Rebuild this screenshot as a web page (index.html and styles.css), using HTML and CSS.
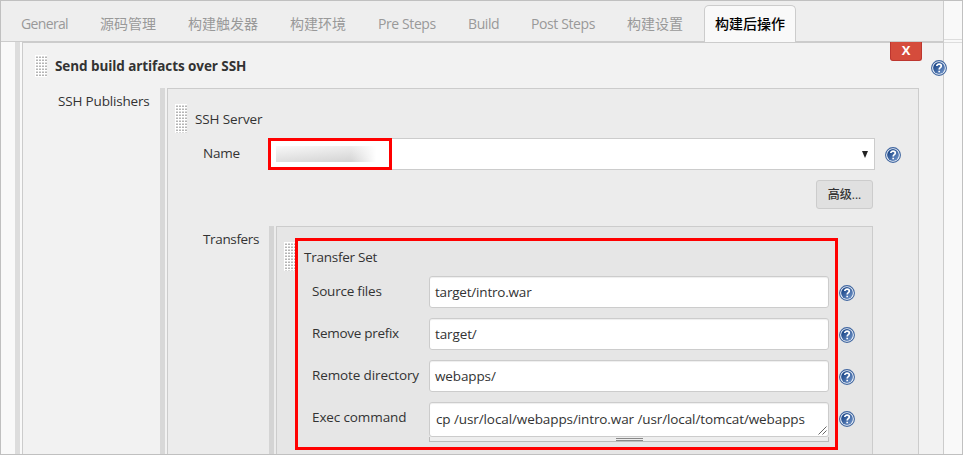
FILE: index.html
```html
<!DOCTYPE html>
<html lang="zh-CN">
<head>
<meta charset="utf-8">
<title>构建后操作</title>
<link rel="stylesheet" href="styles.css">
</head>
<body>
<svg class="defs" width="0" height="0" aria-hidden="true">
  <defs>
    <linearGradient id="blue" x1="0" y1="0" x2="1" y2="1"><stop offset=".2" stop-color="#204b8c"/><stop offset="1" stop-color="#779ace"/></linearGradient>
    <symbol id="help" viewBox="0 0 16 16">
      <circle cx="8" cy="8" r="7.4" fill="#f5f8fc" stroke="#3f659f" stroke-width="1.1"/>
      <circle cx="8" cy="8" r="5.9" fill="url(#blue)"/>
      <path d="M5.8 6.1C5.8 3.5 10.3 3.5 10.3 6.1C10.3 7.7 8.2 7.7 8.2 9.4M8.2 10.7V12.2" fill="none" stroke="#fff" stroke-width="1.7"/>
    </symbol>
  </defs>
</svg>
<div class="frame">
  <main class="config">
    <nav class="tabs">
      <span class="tab t1">General</span><span class="tab t2">源码管理</span><span class="tab t3">构建触发器</span><span class="tab t4">构建环境</span><span class="tab t5">Pre Steps</span><span class="tab t6">Build</span><span class="tab t7">Post Steps</span><span class="tab t8">构建设置</span><span class="tab active">构建后操作</span>
    </nav>
    <div class="body">
      <i class="bar"></i>
      <section class="step">
        <header class="step-head">
          <i class="grip"></i><b class="title">Send build artifacts over SSH</b>
          <button class="remove">X</button>
          <svg class="help"><use href="#help"/></svg>
        </header>
        <div class="publishers">
          <span class="publishers-label">SSH Publishers</span>
          <i class="bar"></i>
          <section class="server">
            <div class="server-head"><i class="grip tall"></i><span class="server-title">SSH Server</span></div>
            <div class="name-row">
              <span class="label name">Name</span>
              <div class="select"><div class="mark"><i class="redacted"></i></div><svg class="arrow" viewBox="0 0 6 7"><path d="M0 0H6L3 7Z"/></svg></div>
              <svg class="help"><use href="#help"/></svg>
            </div>
            <div class="actions"><button class="advanced">高级...</button></div>
            <div class="transfers">
              <span class="label transfers-label">Transfers</span>
              <i class="bar"></i>
              <section class="set">
                <i class="grip tall"></i>
                <div class="fields">
                  <div class="set-title"><span>Transfer Set</span></div>
                  <div class="field"><span class="l1">Source files</span><div class="input"><span class="v1">target/intro.war</span></div><svg class="help"><use href="#help"/></svg></div>
                  <div class="field"><span class="l2">Remove prefix</span><div class="input"><span class="v2">target/</span></div><svg class="help"><use href="#help"/></svg></div>
                  <div class="field"><span class="l3">Remote directory</span><div class="input"><span class="v3">webapps/</span></div><svg class="help"><use href="#help"/></svg></div>
                  <div class="field"><span class="l4">Exec command</span>
                    <div class="area"><div class="input command"><span class="v4">cp /usr/local/webapps/intro.war /usr/local/tomcat/webapps</span><svg class="corner" viewBox="0 0 9 9"><path d="M.5 8.5L8.5 .5M4.5 8.5L8.5 4.5"/></svg></div><div class="resizer"><i></i></div></div>
                    <svg class="help"><use href="#help"/></svg></div>
                </div>
              </section>
            </div>
          </section>
        </div>
      </section>
    </div>
  </main>
  <aside class="side"></aside>
</div>
</body>
</html>
```
FILE: styles.css
```css
* { box-sizing: border-box; }
body { margin: 0; font: 13.5px/20px "Open Sans", "Noto Sans CJK SC", sans-serif; color: #333; overflow: hidden; }
button { font: inherit; }
.defs { position: absolute; }
.frame { display: flex; width: 963px; height: 455px; border: 1px solid #c0c0c0; background: #f9f9f9; overflow: hidden; }
.config { width: 943px; flex: none; border-right: 1px solid #ccc; }
.side { flex: 1; height: 42px; border-bottom: 1px solid #ddd; background: linear-gradient(#ddd, #ddd) 0 38px / 100% 1px no-repeat; }
.tabs { display: flex; height: 41px; padding: 4px 0 0 20px; background: #eee; border-bottom: 1px solid #ccc; white-space: nowrap; color: #999; font-size: 14px; }
.tab { flex: none; height: 37px; line-height: 37px; }
.t1 { width: 79px; letter-spacing: -.65px; }
.t2 { width: 88px; }
.t3 { width: 102px; }
.t4 { width: 88px; }
.t5 { width: 90px; letter-spacing: -.4px; }
.t6 { width: 63px; letter-spacing: -.4px; }
.t7 { width: 96px; letter-spacing: -.4px; }
.t8 { width: 77px; }
.active { width: 92px; padding-left: 10px; border: 1px solid #ccc; border-bottom: 0; border-radius: 5px 5px 0 0; background: #f9f9f9; color: #000; font-weight: 500; line-height: 35px; }
.body { display: flex; height: 412px; padding-left: 14px; }
.bar { flex: none; width: 5px; margin-right: 2px; background: #ddd; }
.step { flex: 1; border: 1px solid #ccc; border-width: 1px 0 0 1px; background: #f2f2f2; }
.step-head { display: flex; height: 45px; padding-left: 12px; }
.grip { flex: none; width: 12px; height: 22px; margin-top: 12px; background: linear-gradient(90deg, #fff 1px, transparent 1px) 0 0 / 3px 3px, linear-gradient(#fff 1px, #d9d9d9 1px 2px, #b5b5b5 2px) 0 0 / 3px 3px; }
.grip.tall { height: 29px; }
.title { width: 835px; margin: 13px 0 0 8px; font-weight: 700; letter-spacing: -.08px; }
.remove { flex: none; width: 32px; height: 19px; margin-top: -1px; padding: 0 0 2px; border: 1px solid #bd362f; border-top: 0; border-radius: 0 0 3px 3px; background: #d54c3c; color: #fff; font-weight: 700; font-size: 13px; line-height: 16px; }
.help { display: block; flex: none; width: 16px; height: 16px; }
.step-head .help { position: relative; z-index: 2; margin: 17px -10px 0 9px; }
.publishers { display: flex; height: 366px; }
.publishers-label { width: 137px; padding: 3px 0 0 35px; letter-spacing: -.17px; white-space: nowrap; }
.publishers .bar { background: #d8d8d8; }
.server { width: 752px; border: 1px solid #ccc; border-bottom: 0; background: #ececec; }
.server-head { display: flex; height: 49px; padding-left: 7px; }
.server-head .grip { margin-top: 15px; }
.server-title { margin: 20px 0 0 8px; letter-spacing: -.12px; }
.name-row { display: flex; height: 32px; padding-left: 35px; }
.label { flex: none; }
.name { width: 65px; padding-top: 5px; letter-spacing: -.2px; }
.select { display: flex; width: 607px; height: 32px; border: 1px solid #ccc; border-left: 0; background: #fff; }
.mark { width: 124px; height: 32px; margin-top: -1px; padding: 8px 0 0 5px; border: 3px solid #f00; }
.redacted { display: block; width: 100px; height: 16px; margin-top: -3px; background: linear-gradient(90deg, transparent 75%, #fff), linear-gradient(175deg, #f8f8f8, #d0d0d0); }
.arrow { width: 6px; height: 7px; margin: 12px 0 0 470px; fill: #222; }
.name-row .help { margin: 9px 0 0 10px; }
.actions { display: flex; justify-content: flex-end; height: 56px; padding: 10px 45px 0 0; }
.advanced { width: 57px; height: 29px; padding: 0; border: 1px solid #ccc; border-radius: 3px; background: #e0e0e0; color: #333; font-size: 12px; font-weight: 500; line-height: 25px; }
.transfers { display: flex; height: 228px; padding-left: 35px; }
.transfers-label { width: 66px; padding-top: 3px; letter-spacing: -.35px; }
.transfers .bar { background: #d4d4d4; }
.set { display: flex; width: 597px; padding: 11px 0 0 7px; border: 1px solid #ccc; border-bottom: 0; background: #e6e6e6; }
.set .grip { margin-top: 4px; }
.fields { width: 543px; height: 212px; margin-left: -1px; border: 3px solid #f00; background: #e6e6e6; }
.set-title { height: 35px; padding: 6px 0 0 6px; letter-spacing: -.25px; }
.field { display: flex; height: 42px; padding-left: 14px; white-space: nowrap; letter-spacing: -.12px; }
.field > span { flex: none; width: 117px; padding-top: 5px; }
.field > .help { margin: 9px 0 0 10px; }
.input { display: flex; flex: none; width: 400px; height: 32px; padding: 5px 5px 0; border: 1px solid #ccc; border-radius: 3px; background: #fff; box-shadow: inset 0 1px 1px #eee; }
.l1 { letter-spacing: -.22px; }
.l2 { letter-spacing: -.3px; }
.v1 { letter-spacing: -.2px; }
.v4 { letter-spacing: -.1px; }
.area { width: 400px; }
.command { position: relative; height: 35px; padding: 6px 6px 0; }
.corner { position: absolute; right: 1px; bottom: 1px; width: 9px; height: 9px; fill: none; stroke: #666; }
.resizer { display: flex; justify-content: center; width: 400px; height: 5px; border: 1px solid #bbb; border-top: 0; background: #eee; }
.resizer i { width: 27px; height: 3px; margin-top: 1px; border: 1px solid #888; border-width: 1px 0; }
```
